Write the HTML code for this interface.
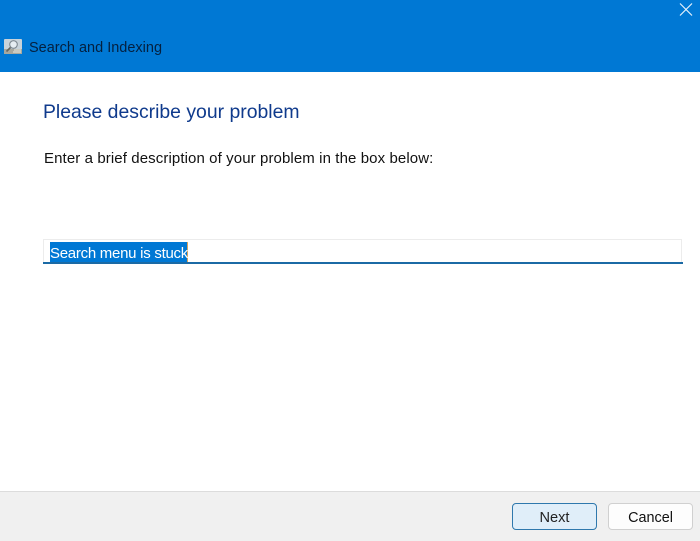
<!DOCTYPE html>
<html>
<head>
<meta charset="utf-8">
<style>
html,body{margin:0;padding:0;background:#fff}
body{width:700px;height:541px;overflow:hidden;position:relative;font-family:"Liberation Sans",sans-serif;color:#000}
.a{position:absolute;white-space:nowrap}
</style>
</head>
<body>
<div class="a" style="left:0;top:0;width:700px;height:72px;background:#0078d4"></div>
<svg class="a" style="left:679px;top:2px" width="15" height="15" viewBox="0 0 15 15"><path d="M1 1.5L13 13.5M13 1.5L1 13.5" stroke="#e6f2fb" stroke-width="1.2" fill="none"/></svg>
<svg class="a" style="left:4px;top:39px" width="18" height="15" viewBox="0 0 18 15">
<rect x="0" y="0" width="18" height="15" rx="1" fill="#c9d3da"/>
<rect x="0" y="10" width="18" height="5" fill="#a8a89e"/>
<circle cx="9.5" cy="5.5" r="3.8" fill="#e6edf2" stroke="#7f8a92" stroke-width="1.1"/>
<path d="M6.5 8.5L2.5 12.5" stroke="#66665f" stroke-width="1.6"/>
<path d="M10 11h7M9 13h8" stroke="#ecece4" stroke-width="1"/>
</svg>
<div class="a" style="left:29px;top:39px;font-size:14.5px;line-height:18px;color:#04203f">Search and Indexing</div>
<div class="a" style="left:43px;top:100px;font-size:19.4px;line-height:24px;color:#0f3a8c">Please describe your problem</div>
<div class="a" style="left:44px;top:150px;font-size:15px;letter-spacing:0.1px;line-height:18px;color:#111">Enter a brief description of your problem in the box below:</div>
<div class="a" style="left:43px;top:239px;width:639px;height:23px;border:1px solid #ececec;border-bottom:0;box-sizing:border-box;background:#fff"></div>
<div class="a" style="left:43px;top:262px;width:640px;height:2px;background:#1b6aa5"></div>
<div class="a" style="left:50px;top:242px;width:137px;height:20px;background:#0078d4"></div>
<div class="a" style="left:187px;top:242px;width:1px;height:20px;background:#d9a35a"></div>
<div class="a" style="left:50px;top:244px;font-size:15px;letter-spacing:-0.27px;line-height:19px;color:#fff">Search menu is stuck</div>
<div class="a" style="left:0;top:491px;width:700px;height:50px;background:#f0f0f0;border-top:1px solid #dcdcdc;box-sizing:border-box"></div>
<div class="a" style="left:512px;top:503px;width:85px;height:27px;box-sizing:border-box;background:#e0eef9;border:1px solid #2f78ad;border-radius:4px;text-align:center;font-size:14.6px;line-height:29px;color:#222">Next</div>
<div class="a" style="left:608px;top:503px;width:85px;height:27px;box-sizing:border-box;background:#fdfdfd;border:1px solid #d0d0d0;border-radius:4px;text-align:center;font-size:14.4px;line-height:29px;color:#111">Cancel</div>
</body>
</html>
